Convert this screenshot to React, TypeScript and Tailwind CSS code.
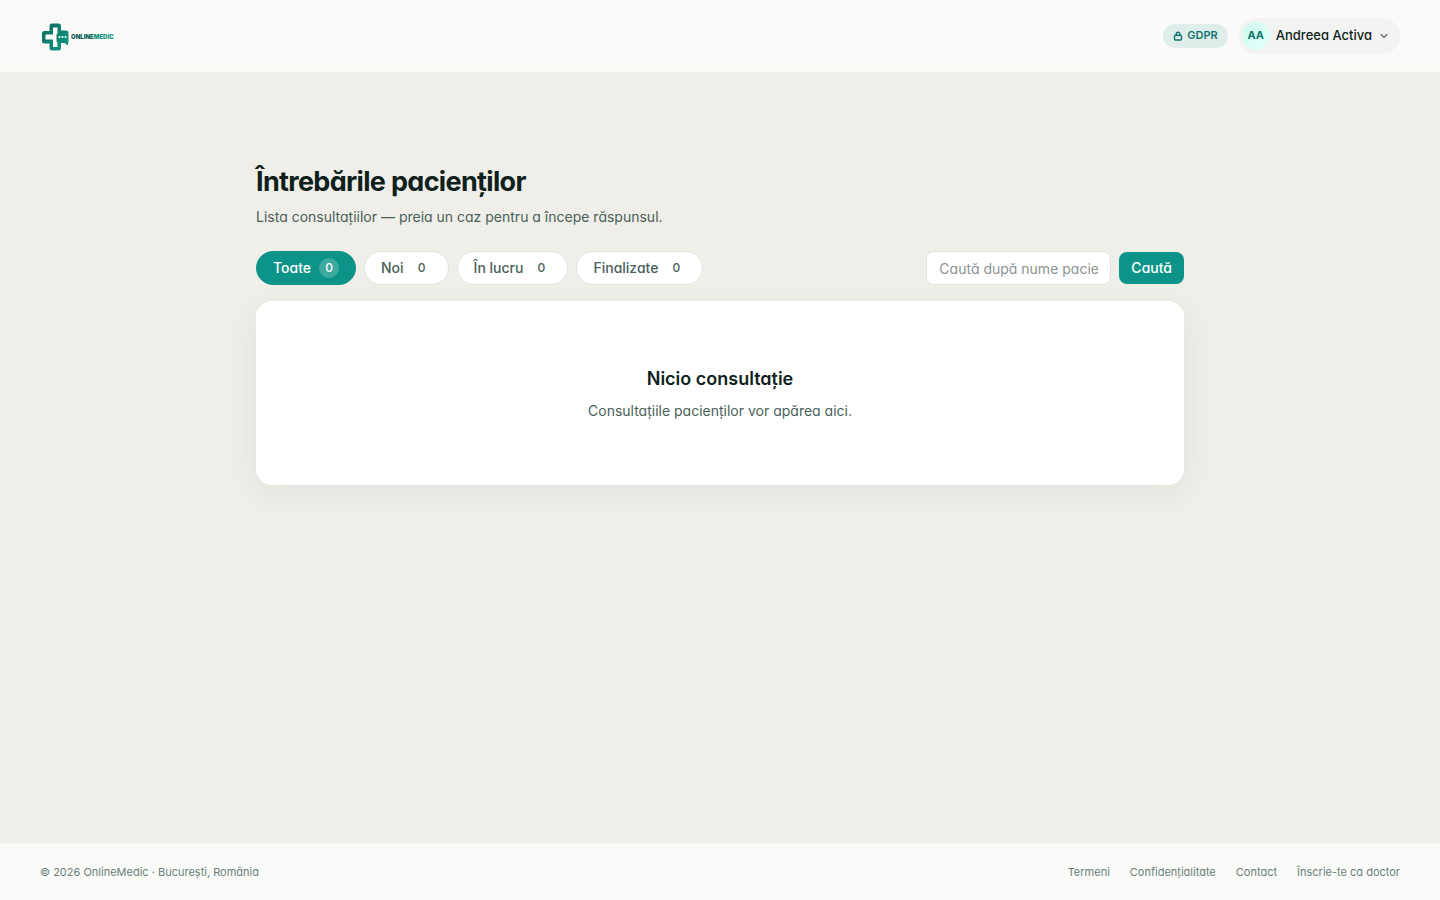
import { useState } from 'react';
import type { FormEvent } from 'react';
import { ChevronDown } from 'lucide-react';

type FilterKey = 'all' | 'new' | 'active' | 'done';

const FILTERS: { key: FilterKey; label: string; count: number }[] = [
  { key: 'all', label: 'Toate', count: 0 },
  { key: 'new', label: 'Noi', count: 0 },
  { key: 'active', label: 'În lucru', count: 0 },
  { key: 'done', label: 'Finalizate', count: 0 },
];

const FOOTER_LINKS = [
  { label: 'Termeni', href: '#termeni' },
  { label: 'Confidențialitate', href: '#confidentialitate' },
  { label: 'Contact', href: '#contact' },
  { label: 'Înscrie-te ca doctor', href: '#inscriere' },
];

const Logo = () => (
  <a href="#acasa" aria-label="OnlineMedic" className="flex items-center gap-px pt-0.5">
    <svg className="h-8 w-[30px]" viewBox="0 0 30 32" fill="none">
      <defs>
        <linearGradient id="logo-cross" x1="2" y1="4" x2="28" y2="28" gradientUnits="userSpaceOnUse">
          <stop stopColor="#0b6b60" />
          <stop offset="1" stopColor="#139a85" />
        </linearGradient>
      </defs>
      <path
        d="M12 2.500h6.500a2.500 2.500 0 0 1 2.500 2.500v4.500h5a2.500 2.500 0 0 1 2.500 2.500v9l-.8 3.500-3-2.500H21V27a2.500 2.500 0 0 1-2.500 2.500H12A2.500 2.500 0 0 1 9.500 27v-4.500H4.500A2.500 2.500 0 0 1 2 20v-7.500A2.500 2.500 0 0 1 4.500 10h5V5A2.500 2.500 0 0 1 12 2.500Z"
        fill="url(#logo-cross)"
      />
      <path d="M13 6.500h4.500v6l-1 1v7l1 1.500v4H13v-7.500H5.500v-5H13Z" fill="#fafaf8" />
      <circle cx="19.500" cy="16" r="1.100" fill="#e6fffa" />
      <circle cx="22.500" cy="16" r="1.100" fill="#e6fffa" />
      <circle cx="25.500" cy="16" r="1.100" fill="#e6fffa" />
    </svg>
    <span className="text-[6px] leading-none font-black text-[#0b5f56]">
      ONLINE<span className="text-[#149480]">MEDIC</span>
    </span>
  </a>
);

const LockIcon = () => (
  <svg className="h-2.5 w-2.5" viewBox="0 0 10 10" fill="none" stroke="currentColor" strokeWidth="1.4">
    <rect x="1.500" y="4.200" width="7" height="4.800" rx="1" />
    <path d="M3.200 4.200V3a1.800 1.800 0 0 1 3.600 0v1.200" />
  </svg>
);

const Header = () => (
  <header className="flex h-[72px] items-center justify-between border-b border-[#f7f7f4] bg-[#fafaf8] px-10">
    <Logo />
    <div className="flex items-center gap-2.5">
      <a
        href="#gdpr"
        className="flex h-6 items-center gap-1 rounded-full bg-[#e0eeeb] px-2.5 text-[11px] font-semibold text-[#0f766e]"
      >
        <LockIcon />
        GDPR
      </a>
      <button type="button" className="flex h-9 items-center gap-1.5 rounded-full bg-[#f3f3f2] pr-2.5 pl-1">
        <span className="flex h-7 w-7 items-center justify-center rounded-full bg-gradient-to-br from-[#ccfbf1] to-[#e6fffa] text-[11px] font-bold text-[#0f766e]">
          AA
        </span>
        <span className="text-[13px] font-medium text-[#0f1f1c]">Andreea Activa</span>
        <ChevronDown className="h-3 w-3 text-[#6b7f7a]" strokeWidth={3} />
      </button>
    </div>
  </header>
);

const Footer = () => (
  <footer className="flex h-[57px] items-center justify-between border-t border-[#f4f4f1] bg-[#fafaf8] px-10 text-[11px] text-[#6b7f7a]">
    <p>© 2026 OnlineMedic · București, România</p>
    <nav className="flex gap-5">
      {FOOTER_LINKS.map((link) => (
        <a key={link.href} href={link.href}>
          {link.label}
        </a>
      ))}
    </nav>
  </footer>
);

export default function App() {
  const [filter, setFilter] = useState<FilterKey>('all');
  const [query, setQuery] = useState('');

  const handleSearch = (event: FormEvent) => {
    event.preventDefault();
  };

  return (
    <div className="flex min-h-screen flex-col bg-[#efeee9] font-['Inter',sans-serif] text-[#0f1f1c] antialiased [font-feature-settings:'cv11']">
      <Header />

      <main className="mx-auto w-full max-w-[1024px] flex-1 px-12 pt-[93px]">
        <h1 className="text-[27px] leading-[34px] font-bold tracking-tight">Întrebările pacienților</h1>
        <p className="mt-2 text-sm leading-5 text-[#4a5f5a]">
          Lista consultațiilor — preia un caz pentru a începe răspunsul.
        </p>

        <div className="mt-6 flex flex-wrap items-center justify-between gap-4">
          <div className="flex flex-wrap gap-2">
            {FILTERS.map((item) => (
              <button
                key={item.key}
                type="button"
                aria-pressed={filter === item.key}
                onClick={() => setFilter(item.key)}
                className={`flex h-[34px] items-center gap-2 rounded-full border px-4 text-sm font-medium ${
                  filter === item.key
                    ? 'border-[#0d9488] bg-[#0d9488] text-white'
                    : 'border-[#e0e5e3] bg-white text-[#4a5f5a]'
                }`}
              >
                {item.label}
                <span
                  className={`flex h-5 min-w-5 items-center justify-center rounded-full text-xs ${
                    filter === item.key ? 'bg-white/20' : 'bg-white'
                  }`}
                >
                  {item.count}
                </span>
              </button>
            ))}
          </div>

          <form onSubmit={handleSearch} className="flex items-center gap-2">
            <input
              type="text"
              aria-label="Caută după nume pacient"
              placeholder="Caută după nume pacient"
              value={query}
              onChange={(event) => setQuery(event.target.value)}
              className="h-[34px] w-[185px] rounded-lg border border-[#e0e5e3] bg-white px-3 text-sm placeholder:text-[#8b9491]"
            />
            <button type="submit" className="h-8 rounded-lg bg-[#0d9488] px-3 text-sm font-medium text-white">
              Caută
            </button>
          </form>
        </div>

        <section className="mt-4 rounded-2xl bg-white px-6 py-16 text-center shadow-[0_8px_32px_rgba(15,60,50,0.06)]">
          <h2 className="text-lg leading-7 font-semibold">Nicio consultație</h2>
          <p className="mt-2 text-sm leading-5 text-[#4a5f5a]">Consultațiile pacienților vor apărea aici.</p>
        </section>
      </main>

      <Footer />
    </div>
  );
}
